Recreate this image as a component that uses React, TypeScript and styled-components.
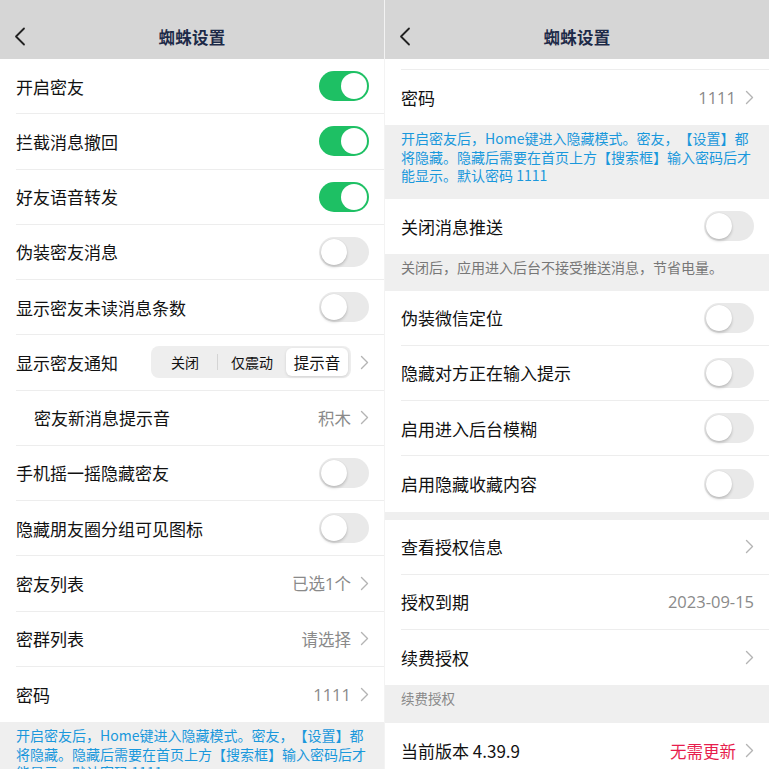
import React from 'react'
import styled, { createGlobalStyle } from 'styled-components'

const GlobalStyle = createGlobalStyle`
  html, body {
    margin: 0;
    padding: 0;
    background: #ffffff;
  }
  body {
    font-family: "Noto Sans CJK SC", "Noto Sans", "Liberation Sans", sans-serif;
    color: #111;
    text-spacing-trim: space-all;
  }
`

const Chevron = ({ color = '#b4b4b4' }: { color?: string }) => (
  <svg width='9' height='15' viewBox='0 0 9 15'>
    <polyline points='1.5,1.5 7.5,7.5 1.5,13.5' fill='none' stroke={color} strokeWidth='1.4' strokeLinecap='round' strokeLinejoin='round' />
  </svg>
)

const BackIcon = () => (
  <svg width='12' height='19' viewBox='0 0 12 19'>
    <polyline points='10,1.5 2,9.5 10,17.5' fill='none' stroke='#222' strokeWidth='1.8' strokeLinecap='round' strokeLinejoin='round' />
  </svg>
)

type RowData =
  | { kind: 'toggle'; label: string; on?: boolean; indent?: boolean }
  | { kind: 'link'; label: string; value?: string; red?: boolean; noChevron?: boolean; indent?: boolean }
  | { kind: 'segment'; label: string }

const SettingRow = ({ row }: { row: RowData }) => {
  return (
    <Row $indent={'indent' in row && !!row.indent}>
      <Label>{row.label}</Label>
      {row.kind === 'toggle' && (
        <Switch $on={!!row.on}>
          <Knob $on={!!row.on} />
        </Switch>
      )}
      {row.kind === 'link' && (
        <Trail>
          {row.value && <Value $red={row.red}>{row.value}</Value>}
          {!row.noChevron && <Chevron />}
        </Trail>
      )}
      {row.kind === 'segment' && (
        <Trail>
          <Segmented>
            <Seg $w={64}>关闭</Seg>
            <SegDivider />
            <Seg $w={68}>仅震动</Seg>
            <Seg $w={62} $active>提示音</Seg>
          </Segmented>
          <Chevron />
        </Trail>
      )}
    </Row>
  )
}

const leftRows: RowData[] = [
  { kind: 'toggle', label: '开启密友', on: true },
  { kind: 'toggle', label: '拦截消息撤回', on: true },
  { kind: 'toggle', label: '好友语音转发', on: true },
  { kind: 'toggle', label: '伪装密友消息' },
  { kind: 'toggle', label: '显示密友未读消息条数' },
  { kind: 'segment', label: '显示密友通知' },
  { kind: 'link', label: '密友新消息提示音', value: '积木', indent: true },
  { kind: 'toggle', label: '手机摇一摇隐藏密友' },
  { kind: 'toggle', label: '隐藏朋友圈分组可见图标' },
  { kind: 'link', label: '密友列表', value: '已选1个' },
  { kind: 'link', label: '密群列表', value: '请选择' },
  { kind: 'link', label: '密码', value: '1111' },
]

const hideNote =
  '开启密友后，Home键进入隐藏模式。密友，【设置】都将隐藏。隐藏后需要在首页上方【搜索框】输入密码后才能显示。默认密码 1111'

const App = () => {
  return (
    <>
      <GlobalStyle />
      <Screen>
        <Panel>
          <NavBar>
            <BackBtn><BackIcon /></BackBtn>
            <Title>蜘蛛设置</Title>
            <span />
          </NavBar>
          <Scroll>
            <Group>
              {leftRows.map((r) => (
                <SettingRow key={r.label} row={r} />
              ))}
            </Group>
            <Note $blue>{hideNote}</Note>
          </Scroll>
        </Panel>

        <Panel $divider>
          <NavBar>
            <BackBtn><BackIcon /></BackBtn>
            <Title>蜘蛛设置</Title>
            <span />
          </NavBar>
          <Scroll>
            <Group>
              {/* bottom of the row scrolled out above */}
              <RowTail />
              <SettingRow row={{ kind: 'link', label: '密码', value: '1111' }} />
            </Group>
            <Note $blue>{hideNote}</Note>
            <Group>
              <SettingRow row={{ kind: 'toggle', label: '关闭消息推送' }} />
            </Group>
            <Note>关闭后，应用进入后台不接受推送消息，节省电量。</Note>
            <Group>
              <SettingRow row={{ kind: 'toggle', label: '伪装微信定位' }} />
              <SettingRow row={{ kind: 'toggle', label: '隐藏对方正在输入提示' }} />
              <SettingRow row={{ kind: 'toggle', label: '启用进入后台模糊' }} />
              <SettingRow row={{ kind: 'toggle', label: '启用隐藏收藏内容' }} />
            </Group>
            <Spacer />
            <Group>
              <SettingRow row={{ kind: 'link', label: '查看授权信息' }} />
              <SettingRow row={{ kind: 'link', label: '授权到期', value: '2023-09-15', noChevron: true }} />
              <SettingRow row={{ kind: 'link', label: '续费授权' }} />
            </Group>
            <SectionFoot>续费授权</SectionFoot>
            <Group>
              <SettingRow row={{ kind: 'link', label: '当前版本 4.39.9', value: '无需更新', red: true }} />
            </Group>
          </Scroll>
        </Panel>
      </Screen>
    </>
  )
}

export default App

const Screen = styled.div`
  display: grid;
  grid-template-columns: 384px 385px;
  width: 769px;
  height: 769px;
  overflow: hidden;
  background: #fff;
`

const Panel = styled.div<{ $divider?: boolean }>`
  display: flex;
  flex-direction: column;
  height: 769px;
  overflow: hidden;
  border-left: ${(p) => (p.$divider ? '1px solid #f3f3f3' : 'none')};
`

const NavBar = styled.div`
  flex: none;
  height: 45px;
  padding-top: 14px;
  background: #d6d6d6;
  display: grid;
  grid-template-columns: 48px 1fr 48px;
  align-items: center;
`

const BackBtn = styled.span`
  display: flex;
  align-items: center;
  padding-left: 14px;
  height: 19px;
`

const Title = styled.div`
  text-align: center;
  font-size: 16.5px;
  font-weight: 700;
  color: #1d2a48;
  letter-spacing: 0.3px;
`

const Scroll = styled.div`
  flex: 1;
  overflow: hidden;
  background: #efefef;
`

const Group = styled.div`
  background: #fff;
`

const Row = styled.div<{ $indent?: boolean }>`
  height: 55.25px;
  box-sizing: border-box;
  margin-left: 16px;
  padding-left: ${(p) => (p.$indent ? '18px' : '0')};
  padding-right: 15px;
  display: flex;
  align-items: center;
  justify-content: space-between;
  border-bottom: 1px solid #ededed;

  &:last-child {
    border-bottom: none;
  }
`

const RowTail = styled.div`
  height: 11px;
  box-sizing: border-box;
  margin-left: 16px;
  border-bottom: 1px solid #ededed;
`

const Label = styled.span`
  font-size: 17px;
  color: #111;
  white-space: nowrap;
`

const Trail = styled.div`
  display: flex;
  align-items: center;
  gap: 9px;
`

const Value = styled.span<{ $red?: boolean }>`
  font-size: 16.5px;
  color: ${(p) => (p.$red ? '#e71d4c' : '#8a8a8a')};
  font-family: ${(p) => (p.$red ? 'inherit' : '"Open Sans", "Noto Sans CJK SC", sans-serif')};
`

const Switch = styled.div<{ $on: boolean }>`
  width: 50px;
  height: 30px;
  border-radius: 15px;
  box-sizing: border-box;
  background: ${(p) => (p.$on ? '#1ec064' : '#e9e9e9')};
  display: flex;
  align-items: center;
  justify-content: ${(p) => (p.$on ? 'flex-end' : 'flex-start')};
  padding: 2px;
`

const Knob = styled.div<{ $on: boolean }>`
  width: 26px;
  height: 26px;
  border-radius: 50%;
  background: #fff;
  box-shadow: ${(p) => (p.$on ? 'none' : '0 2px 3px rgba(0,0,0,0.18), 0 0 1px rgba(0,0,0,0.15)')};
`

const Segmented = styled.div`
  display: flex;
  align-items: center;
  height: 32px;
  width: 200px;
  box-sizing: border-box;
  padding: 2px;
  border-radius: 8px;
  background: #eeeeee;
`

const Seg = styled.span<{ $active?: boolean; $w: number }>`
  flex: 0 0 ${(p) => p.$w}px;
  height: 28px;
  display: flex;
  align-items: center;
  justify-content: center;
  font-size: ${(p) => (p.$active ? '15.5px' : '14px')};
  color: #111;
  border-radius: 6px;
  background: ${(p) => (p.$active ? '#fff' : 'transparent')};
  box-shadow: ${(p) => (p.$active ? '0 1px 3px rgba(0,0,0,0.12)' : 'none')};
`

const SegDivider = styled.span`
  flex: none;
  width: 1px;
  height: 16px;
  background: #d4d4d4;
`

const Note = styled.div<{ $blue?: boolean }>`
  padding: 4px 16px 14px;
  font-size: 14px;
  line-height: 18.5px;
  color: ${(p) => (p.$blue ? '#1a98dc' : '#777')};
  background: #efefef;
`

const Spacer = styled.div`
  height: 8px;
  background: #efefef;
`

const SectionFoot = styled.div`
  padding: 4px 16px 16px;
  font-size: 13.5px;
  line-height: 18px;
  color: #888;
  background: #efefef;
`
